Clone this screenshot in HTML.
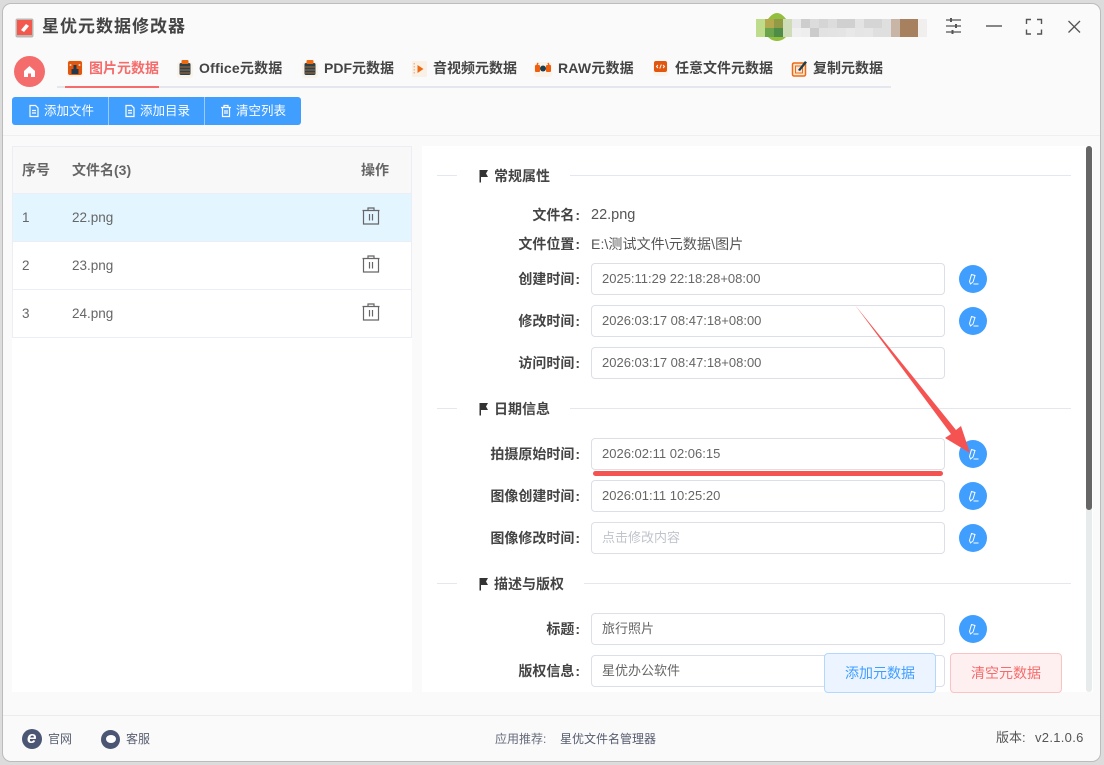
<!DOCTYPE html>
<html lang="zh"><head><meta charset="utf-8"><style>
*{box-sizing:border-box}
html,body{margin:0;padding:0;width:1104px;height:765px;overflow:hidden;background:#dcdcdc;font-family:"Liberation Sans","Noto Sans CJK SC",sans-serif}
.a{position:absolute}
.t{position:absolute;white-space:nowrap;line-height:20px}
#win{position:absolute;left:2px;top:3px;width:1099px;height:759px;background:#fafafa;border:1px solid #bcbcbc;border-radius:9px}
.tab{position:absolute;top:58px;font-size:14px;font-weight:bold;color:#444;white-space:nowrap;line-height:20px}
.lab{position:absolute;width:200px;left:380px;text-align:right;font-size:14px;font-weight:bold;color:#444;line-height:20px;white-space:nowrap}
.lab i{font-style:normal;margin-left:1px}
.inp{position:absolute;left:591px;width:354px;height:32px;background:#fff;border:1px solid #dcdfe6;border-radius:4px;font-size:13px;color:#666;line-height:30px;padding-left:10px;white-space:nowrap}
.ed{position:absolute;left:959px;width:28px;height:28px;border-radius:50%;background:#409eff}
.hr{position:absolute;height:1px;background:#e4e7ed}
.sec{position:absolute;left:494px;font-size:14px;font-weight:bold;color:#444;line-height:20px;white-space:nowrap}
.row{position:absolute;left:12px;width:400px;height:48px;border:1px solid #ebeef5;border-top:none}
.th{position:absolute;top:160px;font-size:14px;font-weight:bold;color:#666;line-height:20px;white-space:nowrap}
.td{position:absolute;font-size:13.500px;color:#666;line-height:20px;white-space:nowrap}
.ic{position:absolute;background:#faf3ea;border-radius:3px}
</style></head><body>
<div id="win"></div>

<svg class="a" style="left:15px;top:18px" width="20" height="20" viewBox="0 0 20 20"><rect x="0.500" y="0.500" width="18" height="19" rx="2" fill="#8a8078" opacity=".55"/><rect x="2" y="2" width="15" height="15" fill="#f4584c"/><path d="M6 12l5-6 3 2-5 6z" fill="#fff"/></svg>
<div class="t" style="left:42px;top:17px;font-size:17px;font-weight:bold;color:#444;letter-spacing:1px">星优元数据修改器</div>

<!-- pixelated avatar and name -->
<svg class="a" style="left:750px;top:8px" width="180" height="40" viewBox="0 0 180 40" shape-rendering="crispEdges">
<path d="M18 11c3-4 6-6 9-6s6 2 9 6zM18 29c3 3 6 4 9 4s6-1 9-4z" fill="#94bf3e" transform="translate(0,0)" shape-rendering="auto"/>
<rect x="6" y="11" width="9" height="18" fill="#bfdb8c"/>
<rect x="15" y="11" width="9" height="9" fill="#b4a94f"/><rect x="24" y="11" width="9" height="9" fill="#919a45"/>
<rect x="15" y="20" width="9" height="9" fill="#6aa54e"/><rect x="24" y="20" width="9" height="9" fill="#4f8c46"/>
<rect x="33" y="11" width="9" height="18" fill="#cfdcb8"/>
<rect x="42" y="11" width="9" height="9" fill="#e8e8e8"/><rect x="42" y="20" width="9" height="9" fill="#f0f0f0"/>
<rect x="51" y="11" width="9" height="9" fill="#cdcdcd"/><rect x="51" y="20" width="9" height="9" fill="#eeeeee"/>
<rect x="60" y="11" width="9" height="9" fill="#dcdcdc"/><rect x="60" y="20" width="9" height="9" fill="#cbcbcb"/>
<rect x="69" y="11" width="9" height="9" fill="#d5d5d5"/><rect x="69" y="20" width="9" height="9" fill="#e2e2e2"/>
<rect x="78" y="11" width="9" height="9" fill="#dcdcdc"/><rect x="78" y="20" width="9" height="9" fill="#e3e3e3"/>
<rect x="87" y="11" width="18" height="9" fill="#d0d0d0"/><rect x="87" y="20" width="9" height="9" fill="#e4e4e4"/><rect x="96" y="20" width="9" height="9" fill="#e8e8e8"/>
<rect x="105" y="11" width="9" height="9" fill="#e3e3e3"/><rect x="105" y="20" width="9" height="9" fill="#e5e5e5"/>
<rect x="114" y="11" width="18" height="9" fill="#d5d5d5"/><rect x="114" y="20" width="9" height="9" fill="#e6e6e6"/><rect x="123" y="20" width="9" height="9" fill="#dfdfdf"/>
<rect x="132" y="11" width="9" height="18" fill="#dfdfdf"/>
<rect x="141" y="11" width="9" height="18" fill="#c9b5a5"/>
<rect x="150" y="11" width="18" height="18" fill="#a6805f"/>
<rect x="168" y="11" width="9" height="18" fill="#f1efed"/>
</svg>

<svg class="a" style="left:940px;top:10px" width="150" height="35" viewBox="0 0 150 35" fill="none" stroke="#555" stroke-width="1.300">
<path d="M6 10h15M6 16h15M6 22h15"/><path d="M11 8v4M16 14v4M12.500 20v4" stroke-width="2"/>
<path d="M46 16h16" stroke-width="1.400"/>
<path d="M86.500 14V9.500H91M97 9.500h4.500V14M101.500 19.500v4.500H97M91 24h-4.500v-4.500" stroke-width="1.400"/>
<path d="M128.500 11l11.500 11.500M140 11l-11.500 11.500" stroke-width="1.300"/>
</svg>

<!-- home -->
<div class="a" style="left:14px;top:56px;width:31px;height:31px;border-radius:50%;background:#f56c6c"></div>
<svg class="a" style="left:22px;top:64px" width="15" height="15" viewBox="0 0 15 15"><path d="M7.500 2L2 7v6h4V9.500h3V13h4V7z" fill="#fff"/></svg>

<!-- tabs -->
<div class="a" style="left:57px;top:86px;width:834px;height:2px;background:#e4e7ed"></div>
<div class="a" style="left:65px;top:86px;width:94px;height:2px;background:#f56c6c"></div>

<div class="ic" style="left:67px;top:60px;width:16px;height:17px"></div>
<svg class="a" style="left:66px;top:60px" width="18" height="18" viewBox="0 0 18 18"><rect x="2" y="1" width="14" height="14" rx="2" fill="#e2560d"/><path d="M5.500 14V9h7v5z" fill="#23394a"/><rect x="7.500" y="5" width="3" height="4" fill="#23394a"/><circle cx="4.500" cy="5" r="1" fill="#f5d9c5"/><circle cx="13.500" cy="5" r="1" fill="#f5d9c5"/></svg>
<div class="tab" style="left:89px;color:#f56c6c">图片元数据</div>

<div class="ic" style="left:177px;top:62px;width:16px;height:16px"></div>
<svg class="a" style="left:177px;top:59px" width="16" height="19" viewBox="0 0 16 19"><rect x="2.500" y="4" width="11" height="12" rx="1.500" fill="#2d4148"/><rect x="4.500" y="1" width="7" height="4" rx="1" fill="#ee6a12"/><path d="M3 8h10M3 11h10M3 14h10" stroke="#a86b3c"/></svg>
<div class="tab" style="left:199px;letter-spacing:.2px">Office元数据</div>

<div class="ic" style="left:302px;top:62px;width:16px;height:16px"></div>
<svg class="a" style="left:302px;top:59px" width="16" height="19" viewBox="0 0 16 19"><rect x="2.500" y="4" width="11" height="12" rx="1.500" fill="#2d4148"/><rect x="4.500" y="1" width="7" height="4" rx="1" fill="#ee6a12"/><path d="M3 8h10M3 11h10M3 14h10" stroke="#a86b3c"/></svg>
<div class="tab" style="left:324px">PDF元数据</div>

<svg class="a" style="left:411px;top:60px" width="17" height="18" viewBox="0 0 17 18"><rect x="1" y="1" width="15" height="16" rx="1.500" fill="#faf1e6"/><path d="M6.500 5l6 4-6 4z" fill="#ee6a12"/><path d="M3.200 3v12" stroke="#e8a070" stroke-dasharray="1.500 1.500"/></svg>
<div class="tab" style="left:433px">音视频元数据</div>

<div class="ic" style="left:534px;top:62px;width:18px;height:15px"></div>
<svg class="a" style="left:534px;top:60px" width="18" height="17" viewBox="0 0 18 17"><rect x="1" y="5" width="5" height="7" rx="1" fill="#ee5f10"/><rect x="12" y="5" width="5" height="7" rx="1" fill="#ee5f10"/><circle cx="9" cy="8.500" r="3" fill="#1f3d4a"/><path d="M3 5l1-2M15 5l-1-2" stroke="#ee5f10" stroke-width="1.500"/></svg>
<div class="tab" style="left:558px;letter-spacing:.2px">RAW元数据</div>

<div class="ic" style="left:653px;top:61px;width:15px;height:15px"></div>
<svg class="a" style="left:653px;top:59px" width="16" height="17" viewBox="0 0 16 17"><rect x="1" y="2" width="13" height="11" rx="2" fill="#e2560d"/><path d="M5 6L3.500 7.500 5 9M10 6l1.500 1.500L10 9M8.300 5.500L6.800 9.500" stroke="#fff" fill="none"/></svg>
<div class="tab" style="left:675px">任意文件元数据</div>

<svg class="a" style="left:791px;top:59px" width="18" height="19" viewBox="0 0 18 19"><rect x="1.500" y="4" width="13" height="13" rx="1.500" fill="#fde6d4" stroke="#ee6a12" stroke-width="1.500"/><rect x="4.500" y="7" width="7" height="7" fill="none" stroke="#ee6a12"/><path d="M7 11L14 2l2 1.500L9 12z" fill="#1f3d4a"/></svg>
<div class="tab" style="left:813px">复制元数据</div>

<!-- toolbar -->
<div class="a" style="left:12px;top:97px;width:289px;height:28px;background:#409eff;border-radius:3px"></div>
<div class="a" style="left:108px;top:97px;width:1px;height:28px;background:#9ccbfa"></div>
<div class="a" style="left:204px;top:97px;width:1px;height:28px;background:#9ccbfa"></div>
<svg class="a" style="left:28px;top:104px" width="12" height="14" viewBox="0 0 12 14" fill="none" stroke="#fff" stroke-width="1.200"><path d="M2 1.500h5.500L10 4v8.500H2zM4 6.500h4M4 9h4"/></svg>
<div class="t" style="left:44px;top:101px;font-size:12.500px;color:#fff">添加文件</div>
<svg class="a" style="left:124px;top:104px" width="12" height="14" viewBox="0 0 12 14" fill="none" stroke="#fff" stroke-width="1.200"><path d="M2 1.500h5.500L10 4v8.500H2zM4 6.500h4M4 9h4"/></svg>
<div class="t" style="left:140px;top:101px;font-size:12.500px;color:#fff">添加目录</div>
<svg class="a" style="left:220px;top:104px" width="12" height="14" viewBox="0 0 12 14" fill="none" stroke="#fff" stroke-width="1.200"><path d="M1 3.500h10M4 3.500V1.500h4v2M2.500 3.500v9h7v-9M5 6v4M7 6v4"/></svg>
<div class="t" style="left:236px;top:101px;font-size:12.500px;color:#fff">清空列表</div>

<div class="a" style="left:3px;top:135px;width:1097px;height:1px;background:#efefef"></div>

<!-- left panel -->
<div class="a" style="left:12px;top:146px;width:400px;height:546px;background:#fff"></div>
<div class="a" style="left:12px;top:146px;width:400px;height:48px;background:#f8f8f8;border:1px solid #ebeef5"></div>
<div class="th" style="left:22px">序号</div>
<div class="th" style="left:72px">文件名(3)</div>
<div class="th" style="left:361px">操作</div>
<div class="row" style="top:194px;background:#e3f5ff"></div>
<div class="row" style="top:242px"></div>
<div class="row" style="top:290px"></div>
<div class="td" style="left:22px;top:208px">1</div><div class="td" style="left:72px;top:208px">22.png</div>
<div class="td" style="left:22px;top:256px">2</div><div class="td" style="left:72px;top:256px">23.png</div>
<div class="td" style="left:22px;top:304px">3</div><div class="td" style="left:72px;top:304px">24.png</div>
<svg class="a" style="left:361px;top:206px" width="20" height="20" viewBox="0 0 20 20" fill="none" stroke="#666" stroke-width="1.200"><path d="M1.500 4.500h17M7 4.500V2h6v2.500M2.500 4.500V18h15V4.500M8.500 8v6.500M11.500 8v6.500"/></svg>
<svg class="a" style="left:361px;top:254px" width="20" height="20" viewBox="0 0 20 20" fill="none" stroke="#666" stroke-width="1.200"><path d="M1.500 4.500h17M7 4.500V2h6v2.500M2.500 4.500V18h15V4.500M8.500 8v6.500M11.500 8v6.500"/></svg>
<svg class="a" style="left:361px;top:302px" width="20" height="20" viewBox="0 0 20 20" fill="none" stroke="#666" stroke-width="1.200"><path d="M1.500 4.500h17M7 4.500V2h6v2.500M2.500 4.500V18h15V4.500M8.500 8v6.500M11.500 8v6.500"/></svg>

<!-- right panel -->
<div class="a" style="left:422px;top:146px;width:671px;height:546px;background:#fff"></div>
<div class="a" style="left:1086px;top:146px;width:6px;height:546px;background:#e8ebeb;border-radius:3px"></div>
<div class="a" style="left:1086px;top:146px;width:6px;height:364px;background:#666;border-radius:3px"></div>

<div class="hr" style="left:437px;top:175px;width:20px"></div><div class="hr" style="left:570px;top:175px;width:501px"></div>
<svg class="a" style="left:478px;top:169px" width="12" height="14" viewBox="0 0 12 14"><path d="M1.500 1h8.500L8 4.500 10 8H3v5.500H1.500z" fill="#333"/></svg>
<div class="sec" style="top:166px">常规属性</div>

<div class="lab" style="top:205px">文件名<i>:</i></div>
<div class="t" style="left:591px;top:205px;font-size:14.500px;color:#555">22.png</div>
<div class="lab" style="top:234px">文件位置<i>:</i></div>
<div class="t" style="left:591px;top:234px;font-size:14px;color:#555;letter-spacing:.1px">E:\测试文件\元数据\图片</div>

<div class="lab" style="top:269px">创建时间<i>:</i></div><div class="inp" style="top:263px">2025:11:29 22:18:28+08:00</div>
<div class="lab" style="top:311px">修改时间<i>:</i></div><div class="inp" style="top:305px">2026:03:17 08:47:18+08:00</div>
<div class="lab" style="top:353px">访问时间<i>:</i></div><div class="inp" style="top:347px">2026:03:17 08:47:18+08:00</div>

<div class="hr" style="left:437px;top:408px;width:20px"></div><div class="hr" style="left:570px;top:408px;width:501px"></div>
<svg class="a" style="left:478px;top:402px" width="12" height="14" viewBox="0 0 12 14"><path d="M1.500 1h8.500L8 4.500 10 8H3v5.500H1.500z" fill="#333"/></svg>
<div class="sec" style="top:399px">日期信息</div>

<div class="lab" style="top:444px">拍摄原始时间<i>:</i></div><div class="inp" style="top:438px">2026:02:11 02:06:15</div>
<div class="lab" style="top:486px">图像创建时间<i>:</i></div><div class="inp" style="top:480px">2026:01:11 10:25:20</div>
<div class="lab" style="top:528px">图像修改时间<i>:</i></div><div class="inp" style="top:522px;color:#c0c4cc">点击修改内容</div>

<div class="hr" style="left:437px;top:583px;width:20px"></div><div class="hr" style="left:584px;top:583px;width:487px"></div>
<svg class="a" style="left:478px;top:577px" width="12" height="14" viewBox="0 0 12 14"><path d="M1.500 1h8.500L8 4.500 10 8H3v5.500H1.500z" fill="#333"/></svg>
<div class="sec" style="top:574px">描述与版权</div>

<div class="lab" style="top:619px">标题<i>:</i></div><div class="inp" style="top:613px">旅行照片</div>
<div class="lab" style="top:661px">版权信息<i>:</i></div><div class="inp" style="top:655px">星优办公软件</div>

<!-- edit buttons -->
<div class="ed" style="top:265px"></div><div class="ed" style="top:307px"></div><div class="ed" style="top:440px"></div><div class="ed" style="top:482px"></div><div class="ed" style="top:524px"></div><div class="ed" style="top:615px"></div>
<svg class="a" style="left:959px;top:265px" width="28" height="28" viewBox="0 0 28 28" fill="none" stroke="#fff" stroke-width="1"><path d="M12.500 9.500l3.500 1-2 6.500-2.500 2-1-2.500zM14.500 19h5"/></svg>
<svg class="a" style="left:959px;top:307px" width="28" height="28" viewBox="0 0 28 28" fill="none" stroke="#fff" stroke-width="1"><path d="M12.500 9.500l3.500 1-2 6.500-2.500 2-1-2.500zM14.500 19h5"/></svg>
<svg class="a" style="left:959px;top:440px" width="28" height="28" viewBox="0 0 28 28" fill="none" stroke="#fff" stroke-width="1"><path d="M12.500 9.500l3.500 1-2 6.500-2.500 2-1-2.500zM14.500 19h5"/></svg>
<svg class="a" style="left:959px;top:482px" width="28" height="28" viewBox="0 0 28 28" fill="none" stroke="#fff" stroke-width="1"><path d="M12.500 9.500l3.500 1-2 6.500-2.500 2-1-2.500zM14.500 19h5"/></svg>
<svg class="a" style="left:959px;top:524px" width="28" height="28" viewBox="0 0 28 28" fill="none" stroke="#fff" stroke-width="1"><path d="M12.500 9.500l3.500 1-2 6.500-2.500 2-1-2.500zM14.500 19h5"/></svg>
<svg class="a" style="left:959px;top:615px" width="28" height="28" viewBox="0 0 28 28" fill="none" stroke="#fff" stroke-width="1"><path d="M12.500 9.500l3.500 1-2 6.500-2.500 2-1-2.500zM14.500 19h5"/></svg>

<!-- red annotation -->
<div class="a" style="left:593px;top:471px;width:350px;height:5px;background:#f55352;border-radius:2.500px"></div>
<svg class="a" style="left:0;top:0" width="1104" height="765" viewBox="0 0 1104 765"><path d="M855 305L956 430 961 426 970 453 945 438 951 434z" fill="#f55352"/></svg>

<!-- bottom buttons -->
<div class="a" style="left:824px;top:653px;width:112px;height:40px;background:#ecf5ff;border:1px solid #b3d8ff;border-radius:4px;color:#409eff;font-size:14px;line-height:38px;text-align:center">添加元数据</div>
<div class="a" style="left:950px;top:653px;width:112px;height:40px;background:#fef0f0;border:1px solid #fbc4c4;border-radius:4px;color:#f56c6c;font-size:14px;line-height:38px;text-align:center">清空元数据</div>

<!-- footer -->
<div class="a" style="left:3px;top:715px;width:1097px;height:1px;background:#ececec"></div>
<div class="a" style="left:22px;top:729px;width:20px;height:20px;border-radius:50%;background:#4a5673"></div>
<div class="t" style="left:27px;top:728px;font-size:17px;font-weight:bold;font-style:italic;color:#fff">e</div>
<div class="t" style="left:48px;top:729px;font-size:12px;color:#5a6072">官网</div>
<div class="a" style="left:101px;top:730px;width:19px;height:19px;border-radius:50%;background:#4a5673"></div>
<div class="a" style="left:106px;top:735px;width:10px;height:8px;border-radius:50%;background:#fff"></div>
<div class="t" style="left:126px;top:729px;font-size:12px;color:#5a6072">客服</div>
<div class="t" style="left:495px;top:729px;font-size:12px;color:#666c7c">应用推荐:</div>
<div class="t" style="left:560px;top:729px;font-size:12px;color:#555b6e">星优文件名管理器</div>
<div class="t" style="left:996px;top:728px;font-size:13px;color:#555">版本:</div>
<div class="t" style="left:1035px;top:728px;font-size:13px;color:#555;letter-spacing:.3px">v2.1.0.6</div>
</body></html>
